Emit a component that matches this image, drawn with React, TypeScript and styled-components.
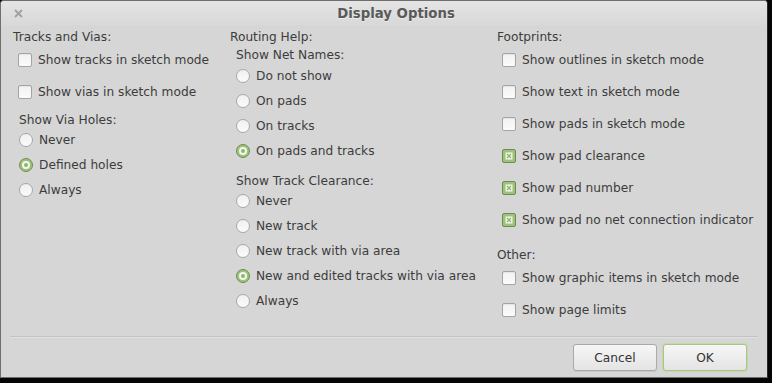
import React from 'react';
import styled, { createGlobalStyle } from 'styled-components';

const GlobalStyle = createGlobalStyle`
  html, body {
    margin: 0;
    padding: 0;
    background: #050505;
    width: 772px;
    height: 383px;
    overflow: hidden;
  }
  body {
    font-family: 'DejaVu Sans', 'Liberation Sans', sans-serif;
    font-size: 12.2px;
    color: #3c3c3c;
  }
`;

type Item = { label: string; checked?: boolean };

const tracksChecks: Item[] = [
  { label: 'Show tracks in sketch mode' },
  { label: 'Show vias in sketch mode' },
];

const viaHoles: Item[] = [
  { label: 'Never' },
  { label: 'Defined holes', checked: true },
  { label: 'Always' },
];

const netNames: Item[] = [
  { label: 'Do not show' },
  { label: 'On pads' },
  { label: 'On tracks' },
  { label: 'On pads and tracks', checked: true },
];

const trackClearance: Item[] = [
  { label: 'Never' },
  { label: 'New track' },
  { label: 'New track with via area' },
  { label: 'New and edited tracks with via area', checked: true },
  { label: 'Always' },
];

const footprintChecks: Item[] = [
  { label: 'Show outlines in sketch mode' },
  { label: 'Show text in sketch mode' },
  { label: 'Show pads in sketch mode' },
  { label: 'Show pad clearance', checked: true },
  { label: 'Show pad number', checked: true },
  { label: 'Show pad no net connection indicator', checked: true },
];

const otherChecks: Item[] = [
  { label: 'Show graphic items in sketch mode' },
  { label: 'Show page limits' },
];

const CheckList = ({ items }: { items: Item[] }) => (
  <>
    {items.map((item) => (
      <CheckRow key={item.label}>
        <CheckBox $checked={item.checked}>
          {item.checked && (
            <svg width="8" height="8" viewBox="0 0 8 8">
              <rect x="0.5" y="0.5" width="7" height="7" fill="#f4f7ef" />
              <path d="M2 2 L6 6 M6 2 L2 6" stroke="#8fb56a" strokeWidth="1.4" />
            </svg>
          )}
        </CheckBox>
        <span>{item.label}</span>
      </CheckRow>
    ))}
  </>
);

const RadioList = ({ items }: { items: Item[] }) => (
  <>
    {items.map((item) => (
      <RadioRow key={item.label}>
        <Radio $checked={item.checked}>{item.checked && <RadioDot />}</Radio>
        <span>{item.label}</span>
      </RadioRow>
    ))}
  </>
);

const App: React.FC = () => {
  return (
    <>
      <GlobalStyle />
      <Window>
        <TitleBar>
          <CloseIcon width="9" height="9" viewBox="0 0 9 9">
            <path d="M1 1 L8 8 M8 1 L1 8" stroke="#a2a2a2" strokeWidth="2" />
          </CloseIcon>
          <Title>Display Options</Title>
        </TitleBar>
        <Body>
          <Column>
            <Heading>Tracks and Vias:</Heading>
            <Indent $shift={-1}>
              <CheckList items={tracksChecks} />
              <SubHeading $gap={5}>Show Via Holes:</SubHeading>
              <Group $shift={-1}>
                <RadioList items={viaHoles} />
              </Group>
            </Indent>
          </Column>
          <Column>
            <Heading>Routing Help:</Heading>
            <Indent>
              <SubHeading $gap={3}>Show Net Names:</SubHeading>
              <RadioList items={netNames} />
              <SubHeading $gap={11}>Show Track Clearance:</SubHeading>
              <Group $shift={-1}>
                <RadioList items={trackClearance} />
              </Group>
            </Indent>
          </Column>
          <Column>
            <Heading>Footprints:</Heading>
            <Indent $shift={-1}>
              <CheckList items={footprintChecks} />
            </Indent>
            <Heading $gap={12}>Other:</Heading>
            <Indent $shift={-1}>
              <CheckList items={otherChecks} />
            </Indent>
          </Column>
        </Body>
        <Separator />
        <ButtonBar>
          <Button>Cancel</Button>
          <Button $default>OK</Button>
        </ButtonBar>
      </Window>
    </>
  );
};

export default App;

// Styled components

const Window = styled.div`
  box-sizing: border-box;
  width: 768px;
  height: 378px;
  display: flex;
  flex-direction: column;
  background: #d6d6d6;
  border: 1px solid #6e6e6e;
  border-right-color: #2a2a2a;
  border-radius: 4px 4px 0 0;
  overflow: hidden;
`;

const TitleBar = styled.div`
  position: relative;
  height: 24px;
  flex: none;
  display: flex;
  align-items: center;
  justify-content: center;
  background: linear-gradient(#e4e4e4, #d8d8d8);
`;

const CloseIcon = styled.svg`
  position: absolute;
  left: 13px;
  top: 8px;
`;

const Title = styled.div`
  font-size: 13.3px;
  font-weight: bold;
  color: #5a5a5a;
  margin-left: 24px;
  text-shadow: 0 1px 0 #ececec;
`;

const Body = styled.div`
  display: grid;
  grid-template-columns: 217px 267px 1fr;
  padding: 5px 0 0 12px;
  flex: 1;
`;

const Column = styled.div`
  display: flex;
  flex-direction: column;
`;

const Heading = styled.div<{ $gap?: number }>`
  line-height: 15px;
  margin-top: ${({ $gap }) => $gap ?? 0}px;
`;

const Indent = styled.div<{ $shift?: number }>`
  display: flex;
  flex-direction: column;
  padding-left: 5px;
  margin-top: ${({ $shift }) => $shift ?? 0}px;
`;

const Group = styled.div<{ $shift?: number }>`
  display: flex;
  flex-direction: column;
  margin-top: ${({ $shift }) => $shift ?? 0}px;
`;

const SubHeading = styled.div<{ $gap: number }>`
  line-height: 15px;
  margin-top: ${({ $gap }) => $gap}px;
  padding-left: 1px;
`;

const CheckRow = styled.div`
  height: 32px;
  display: flex;
  align-items: center;
  gap: 6px;
  white-space: nowrap;
`;

const CheckBox = styled.span<{ $checked?: boolean }>`
  box-sizing: border-box;
  width: 14px;
  height: 14px;
  flex: none;
  display: flex;
  align-items: center;
  justify-content: center;
  border-radius: 2px;
  border: 1px solid ${({ $checked }) => ($checked ? '#6f8c55' : '#a4a4a4')};
  background: ${({ $checked }) =>
    $checked ? '#9ec27a' : 'linear-gradient(#f2f2f2, #fbfbfb)'};
  box-shadow: ${({ $checked }) => ($checked ? 'none' : 'inset 0 1px 1px rgba(0,0,0,0.06)')};
`;

const RadioRow = styled.div`
  height: 25px;
  display: flex;
  align-items: center;
  gap: 6px;
  padding-left: 1px;
  white-space: nowrap;
`;

const Radio = styled.span<{ $checked?: boolean }>`
  box-sizing: border-box;
  width: 14px;
  height: 14px;
  flex: none;
  border-radius: 50%;
  display: flex;
  align-items: center;
  justify-content: center;
  border: 1px solid ${({ $checked }) => ($checked ? '#6f8c55' : '#a8a8a8')};
  background: ${({ $checked }) => ($checked ? '#9ec27a' : 'linear-gradient(#f0f0f0, #fbfbfb)')};
`;

const RadioDot = styled.span`
  box-sizing: border-box;
  width: 8px;
  height: 8px;
  border-radius: 50%;
  background: #8fb56a;
  border: 2px solid #f4f7ef;
`;

const Separator = styled.div`
  height: 1px;
  margin: 0 9px;
  background: #c2c2c2;
  border-bottom: 1px solid #e2e2e2;
`;

const ButtonBar = styled.div`
  display: flex;
  justify-content: flex-end;
  gap: 6px;
  padding: 6px 20px 6px 0;
`;

const Button = styled.button<{ $default?: boolean }>`
  box-sizing: border-box;
  width: 84px;
  height: 27px;
  font-family: 'DejaVu Sans', 'Liberation Sans', sans-serif;
  font-size: 12.2px;
  color: #333;
  border-radius: 3px;
  border: 1px solid ${({ $default }) => ($default ? '#a7c585' : '#a9a9a9')};
  box-shadow: ${({ $default }) =>
    $default ? '0 0 0 1px #c3d9a9' : '0 1px 0 rgba(0,0,0,0.08)'};
  background: linear-gradient(#f6f6f6, #e4e4e4);
  padding: 0;
`;
